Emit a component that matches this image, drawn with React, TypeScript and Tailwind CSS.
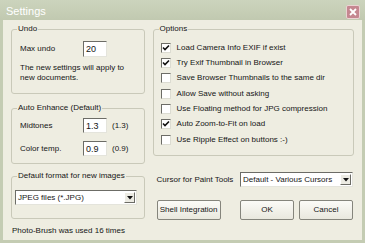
import React from "react";

const options = [
  { label: "Load Camera Info EXIF if exist", checked: true },
  { label: "Try Exif Thumbnail in Browser", checked: true },
  { label: "Save Browser Thumbnails to the same dir", checked: false },
  { label: "Allow Save without asking", checked: false },
  { label: "Use Floating method for JPG compression", checked: false },
  { label: "Auto Zoom-to-Fit on load", checked: true },
  { label: "Use Ripple Effect on buttons :-)", checked: false },
];

function Checkbox({ checked }: { checked: boolean }) {
  return (
    <span className="w-[10px] h-[10px] shrink-0 bg-white border border-t-[#6c6c66] border-l-[#6c6c66] border-b-[#dcdcd2] border-r-[#dcdcd2] flex items-center justify-center">
      {checked && (
        <svg width="8" height="8" viewBox="0 0 8 8">
          <path d="M1 3.5 L3 5.5 L7 1.5" fill="none" stroke="#111" strokeWidth="1.6" />
        </svg>
      )}
    </span>
  );
}

function TextBox({ value, h }: { value: string; h: string }) {
  return (
    <div className={`w-[24px] ${h} bg-white border border-t-[#6c6c66] border-l-[#6c6c66] border-b-[#e4e4dc] border-r-[#e4e4dc] pl-[2px] flex items-center text-[9px]`}>
      {value}
    </div>
  );
}

function Select({ value, w }: { value: string; w: string }) {
  return (
    <div className={`${w} h-[15px] bg-white border border-t-[#6c6c66] border-l-[#6c6c66] border-b-[#e4e4dc] border-r-[#e4e4dc] flex items-center justify-between pl-[2px] pr-[1px]`}>
      <span>{value}</span>
      <span className="w-[11px] h-[11px] bg-[#ecebe3] border border-t-white border-l-white border-b-[#6c6c66] border-r-[#6c6c66] flex items-center justify-center">
        <svg width="6" height="4" viewBox="0 0 6 4">
          <path d="M0 0 H6 L3 3.5 Z" fill="#111" />
        </svg>
      </span>
    </div>
  );
}

function Button({ children, w }: { children: React.ReactNode; w: string }) {
  return (
    <button className={`${w} h-[20px] rounded-[2px] border border-[#85857c] bg-gradient-to-b from-[#fbfbf7] to-[#e9e8de] text-[8px]`}>
      {children}
    </button>
  );
}

export default function App() {
  return (
    <div className="w-[365px] h-[243px] bg-[#c4ccb3] flex flex-col text-[8px] leading-[10px] text-[#151515] font-['Liberation_Sans',Arial,sans-serif]">
      {/* title bar */}
      <div className="h-[20px] flex items-center justify-between pl-[6px] pr-[5px] bg-gradient-to-b from-[#ccd4bd] to-[#c1c9b0]">
        <span className="text-[11px] text-white leading-[12px] mt-[1px]">Settings</span>
        <span className="w-[14px] h-[14px] mt-[3px] rounded-[2px] bg-[#c58790] border border-[#ead3d3] flex items-center justify-center">
          <svg width="8" height="8" viewBox="0 0 8 8">
            <path d="M1 1 L7 7 M7 1 L1 7" stroke="white" strokeWidth="1.8" />
          </svg>
        </span>
      </div>

      <div className="flex-1 mx-[3px] mb-[3px] bg-[#eeede1] flex px-[8px] pt-[4px] gap-[8px]">
        {/* left column */}
        <div className="w-[134px] flex flex-col">
          <fieldset className="border border-[#c9c9b9] rounded-[3px] pl-[8px] pb-[10px]">
            <legend className="-ml-[3px] px-[1px]">Undo</legend>
            <div className="flex items-center h-[16px] mt-[7px]">
              <span className="w-[63px]">Max undo</span>
              <TextBox value="20" h="h-[16px]" />
            </div>
            <p className="mt-[6px]">
              The new settings will apply to
              <br />
              new documents.
            </p>
          </fieldset>

          <fieldset className="mt-[9px] border border-[#c9c9b9] rounded-[3px] pl-[8px] pb-[7px]">
            <legend className="-ml-[3px] px-[1px]">Auto Enhance (Default)</legend>
            <div className="flex items-center h-[15px] mt-[5px]">
              <span className="w-[63px]">Midtones</span>
              <TextBox value="1.3" h="h-[15px]" />
              <span className="ml-[5px]">(1.3)</span>
            </div>
            <div className="flex items-center h-[15px] mt-[8px]">
              <span className="w-[63px]">Color temp.</span>
              <TextBox value="0.9" h="h-[15px]" />
              <span className="ml-[5px]">(0.9)</span>
            </div>
          </fieldset>

          <fieldset className="mt-[7px] border border-[#c9c9b9] rounded-[3px] pl-[3px] pb-[13px]">
            <legend className="ml-[2px] px-[1px]">Default format for new images</legend>
            <div className="mt-[9px]">
              <Select value="JPEG files (*.JPG)" w="w-[122px]" />
            </div>
          </fieldset>

          <p className="mt-[7px] pl-[1px]">Photo-Brush was used 16 times</p>
        </div>

        {/* right column */}
        <div className="w-[202px] flex flex-col">
          <fieldset className="border border-[#c9c9b9] rounded-[3px] pl-[7px] pt-[6px] pb-[8px]">
            <legend className="-ml-[2px] px-[1px]">Options</legend>
            {options.map((o) => (
              <div key={o.label} className="h-[15.33px] flex items-center gap-[6px]">
                <Checkbox checked={o.checked} />
                <span>{o.label}</span>
              </div>
            ))}
          </fieldset>

          <div className="mt-[16px] flex items-center justify-between pl-[4px] pr-[1px]">
            <span>Cursor for Paint Tools</span>
            <Select value="Default - Various Cursors" w="w-[113px]" />
          </div>

          <div className="mt-[13px] flex items-center pl-[4px] pr-[1px]">
            <Button w="w-[64px]">Shell Integration</Button>
            <div className="ml-auto flex gap-[5px]">
              <Button w="w-[54px]">OK</Button>
              <Button w="w-[54px]">Cancel</Button>
            </div>
          </div>
        </div>
      </div>
    </div>
  );
}
